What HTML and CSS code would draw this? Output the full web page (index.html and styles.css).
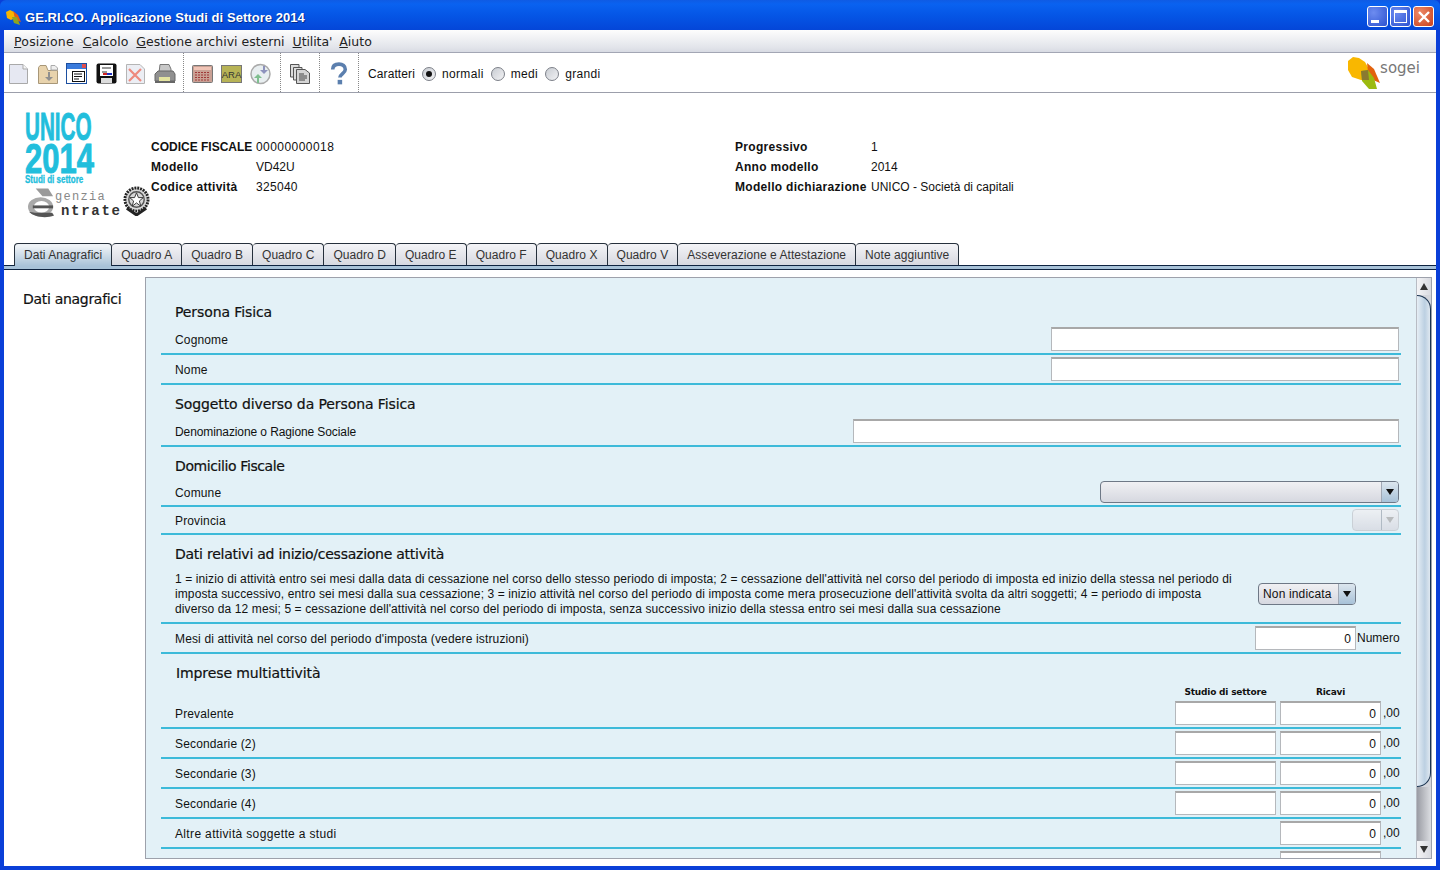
FILE: index.html
```html
<!DOCTYPE html>
<html lang="it">
<head>
<meta charset="utf-8">
<title>GE.RI.CO.</title>
<link rel="stylesheet" href="styles.css">
</head>
<body>
<div class="window">
  <header class="titlebar">
    <svg class="app-icon" viewBox="0 0 18 18" width="18" height="18"><path d="M1 4 L5 2 L9 4 L10 10 L6 12 L2 10Z" fill="#f7b500"/><path d="M8 3 L13 7 L16 14 L11 12Z" fill="#e85a10"/><path d="M7 9 L12 9 L15 17 L9 15Z" fill="#8fa520"/></svg>
    <span class="title-text">GE.RI.CO. Applicazione Studi di Settore 2014</span>
    <div class="win-buttons">
      <span class="wbtn"><i class="g-min"></i></span>
      <span class="wbtn"><i class="g-max"></i></span>
      <span class="wbtn close"><svg viewBox="0 0 12 12" width="12" height="12"><path d="M1 1L11 11M11 1L1 11" stroke="#fff" stroke-width="2.4"/></svg></span>
    </div>
  </header>
  <div class="frame">
    <nav class="menubar">
      <span class="m1"><u>P</u>osizione</span><span class="m2"><u>C</u>alcolo</span><span class="m3"><u>G</u>estione archivi esterni</span><span class="m4"><u>U</u>tilita'</span><span class="m5"><u>A</u>iuto</span>
    </nav>
    <div class="toolbar">
      <div class="tgroup g1">
        <svg class="ic" viewBox="0 0 22 22"><path d="M1.5 1.5H15L19.5 6V20.5H1.5Z" fill="#e6e8f2" stroke="#a9a9a9"/><path d="M15 1.5V6H19.5" fill="#f6f6f6" stroke="#a9a9a9"/></svg>
        <svg class="ic" viewBox="0 0 22 22"><path d="M1.5 4.5V20.5H20.5V7.5H11L9 2.5H3Z" fill="#e8d3ad" stroke="#a89778"/><path d="M11 9V14H8L12 18L16 14H13V9Z" fill="#8f8f8f"/><path d="M14 2.5H18L20.5 5V7H14Z" fill="#efefef" stroke="#aaa"/></svg>
        <svg class="ic" viewBox="0 0 22 22"><rect x="0.5" y="0.5" width="20" height="20" fill="#fff" stroke="#1c4fa0"/><rect x="1" y="1" width="19" height="5" fill="#3a7bdc"/><rect x="16" y="1" width="4" height="4" fill="#e05050"/><rect x="6.5" y="8.5" width="12" height="10" fill="#fff" stroke="#111"/><path d="M8 11H16M8 13.5H16M8 16H13" stroke="#111"/></svg>
        <svg class="ic" viewBox="0 0 22 22"><rect x="0.5" y="0.5" width="20" height="20" rx="2" fill="#111"/><rect x="4" y="2" width="13" height="11" fill="#fff"/><path d="M6 5H15M6 9H11" stroke="#333"/><path d="M7 11H11" stroke="#d02020" stroke-width="2"/><path d="M11 11H16" stroke="#2030c0" stroke-width="2"/><rect x="5" y="15" width="11" height="5" fill="#ddd"/></svg>
        <svg class="ic" viewBox="0 0 22 22"><path d="M1.5 1.5H15L19.5 6V20.5H1.5Z" fill="#eceef4" stroke="#b5b5b5"/><path d="M4 6L16 18M16 6L4 18" stroke="#ee8a7e" stroke-width="2.2"/></svg>
        <svg class="ic" viewBox="0 0 22 22"><path d="M6 1.5H15L17 6V10H5Z" fill="#c8c8c8" stroke="#777"/><path d="M1 11L4 8H19L21 11V18H1Z" fill="#909090" stroke="#666"/><rect x="5" y="14" width="11" height="4" fill="#e4e4a0"/><rect x="1" y="18" width="20" height="2" fill="#666"/></svg>
      </div>
      <div class="tgroup g2">
        <svg class="ic" viewBox="0 0 22 22"><rect x="0.5" y="2.5" width="20" height="17" rx="1" fill="#c9a094" stroke="#777"/><rect x="2" y="4" width="17" height="3" fill="#f0c4b6"/><path d="M3 9.5H18M3 12H18M3 14.5H18M3 17H18" stroke="#a03838" stroke-dasharray="2 1"/></svg>
        <svg class="ic" viewBox="0 0 22 22"><rect x="0.5" y="2.5" width="20" height="17" fill="#b7b356" stroke="#777"/><text x="10.5" y="15" class="ara">ARA</text></svg>
        <svg class="ic" viewBox="0 0 22 22"><circle cx="10.5" cy="11" r="9.5" fill="#e8eef0" stroke="#aaa" stroke-width="1.5"/><path d="M13 3V7H10L14 11L18 7H15V3Z" fill="#8d92bd"/><path d="M9 20V15H12L8 11L4 15H7V20Z" fill="#7fbf8f"/></svg>
      </div>
      <div class="tgroup g3">
        <svg class="ic" viewBox="0 0 22 22"><path d="M1.5 1.5H10V14H1.5Z" fill="#ddd" stroke="#555"/><path d="M4.5 4.5H13V17H4.5Z" fill="#ddd" stroke="#555"/><path d="M7.5 6.5H16L20.5 10V20.5H7.5Z" fill="#d5d5d5" stroke="#555"/><path d="M10 11H15M10 13H18M10 15H18M10 17H16" stroke="#444"/></svg>
      </div>
      <div class="tgroup g4">
        <svg class="help" viewBox="0 0 20 26"><path d="M3 8C3 3 7 2 10 2C14 2 17 4 17 8C17 12 11 13 11 17" fill="none" stroke="#5b7fae" stroke-width="4"/><rect x="8.5" y="19.5" width="5" height="5" fill="#5b7fae"/></svg>
      </div>
      <div class="chars">
        <span class="chars-label">Caratteri</span>
        <span class="radio on"></span><span class="rl">normali</span>
        <span class="radio"></span><span class="rl">medi</span>
        <span class="radio"></span><span class="rl">grandi</span>
      </div>
      <div class="sogei">
        <svg viewBox="0 2 36 36" width="36" height="36"><path d="M1 8 L6 4 L12 5 L18 9 L23 18 L22 27 L14 27 L5 24 L1 17Z" fill="#f9b700"/><path d="M20 10 L27 16 L33 30 L26 27 L21 19Z" fill="#e2620e"/><path d="M14 18 L21 17 L27 25 L30 36 L22 36 L15 28Z" fill="#9cba10"/><path d="M14 18 L21 17 L22 27 L15 27Z" fill="#8a7a30"/></svg>
        <span class="sogei-text">sogei</span>
      </div>
    </div>
    <div class="info">
      <div class="logos">
        <div class="unico">UNICO</div>
        <div class="y2014">2014</div>
        <div class="studi">Studi di settore</div>
        <div class="agenzia">
          <svg class="ae" viewBox="0 0 30 30" width="29" height="30"><path d="M9 0H22L27 8H16Z" fill="#9a9a9a"/><ellipse cx="14" cy="19" rx="13" ry="10" fill="#a9a9a9"/><ellipse cx="15" cy="19" rx="8" ry="6" fill="#fff"/><rect x="6" y="17.5" width="21" height="3" fill="#555"/><path d="M2 24C8 30 20 31 28 28L26 25H8Z" fill="#555"/></svg>
          <div class="ag-text"><span class="ag1">genzia</span><span class="ag2">ntrate</span></div>
          <svg class="emblem" viewBox="0 0 28 32" width="27" height="31"><circle cx="14" cy="15" r="12" fill="#d8d8d8" stroke="#222" stroke-width="3" stroke-dasharray="2 1"/><circle cx="14" cy="15" r="8" fill="none" stroke="#555" stroke-width="1.5"/><path d="M14 8L16 13L21 13L17 16.5L18.5 22L14 18.5L9.5 22L11 16.5L7 13L12 13Z" fill="#fff" stroke="#333"/><path d="M4 24L14 31L24 24" fill="none" stroke="#222" stroke-width="3"/></svg>
        </div>
      </div>
      <dl class="col-a">
        <dt class="caps">CODICE FISCALE</dt><dd class="digits">00000000018</dd>
        <dt>Modello</dt><dd>VD42U</dd>
        <dt>Codice attività</dt><dd class="digits short">325040</dd>
      </dl>
      <dl class="col-b">
        <dt>Progressivo</dt><dd>1</dd>
        <dt>Anno modello</dt><dd>2014</dd>
        <dt>Modello dichiarazione</dt><dd>UNICO - Società di capitali</dd>
      </dl>
    </div>
    <div class="tabs">
      <span class="tab active">Dati Anagrafici</span><span class="tab">Quadro A</span><span class="tab">Quadro B</span><span class="tab">Quadro C</span><span class="tab">Quadro D</span><span class="tab">Quadro E</span><span class="tab">Quadro F</span><span class="tab">Quadro X</span><span class="tab">Quadro V</span><span class="tab">Asseverazione e Attestazione</span><span class="tab">Note aggiuntive</span>
    </div>
    <div class="tab-band"></div>
    <div class="content">
      <h2 class="side-title">Dati anagrafici</h2>
      <div class="panel">
        <div class="form">
          <h3 class="sec s1">Persona Fisica</h3>
          <div class="row r30"><span class="lbl">Cognome</span><span class="inp w348"></span></div>
          <div class="row r30"><span class="lbl">Nome</span><span class="inp w348"></span></div>
          <h3 class="sec s2">Soggetto diverso da Persona Fisica</h3>
          <div class="row r30"><span class="lbl narrow">Denominazione o Ragione Sociale</span><span class="inp w546"></span></div>
          <h3 class="sec s2 tight">Domicilio Fiscale</h3>
          <div class="row r28"><span class="lbl">Comune</span><span class="combo w299"><i class="arrow"></i></span></div>
          <div class="row r28"><span class="lbl">Provincia</span><span class="combo w47 disabled"><i class="arrow"></i></span></div>
          <h3 class="sec s3">Dati relativi ad inizio/cessazione attività</h3>
          <div class="row rpara">
            <p class="para">1 = inizio di attività entro sei mesi dalla data di cessazione nel corso dello stesso periodo di imposta; 2 = cessazione dell'attività nel corso del periodo di imposta ed inizio della stessa nel periodo di imposta successivo, entro sei mesi dalla sua cessazione; 3 = inizio attività nel corso del periodo di imposta come mera prosecuzione dell'attività svolta da altri soggetti; 4 = periodo di imposta diverso da 12 mesi; 5 = cessazione dell'attività nel corso del periodo di imposta, senza successivo inizio della stessa entro sei mesi dalla sua cessazione</p>
            <span class="combo w98 nonind"><span>Non indicata</span><i class="arrow"></i></span>
          </div>
          <div class="row r30"><span class="lbl">Mesi di attività nel corso del periodo d'imposta (vedere istruzioni)</span><span class="inp w101 num mesi">0</span><span class="unit">Numero</span></div>
          <h3 class="sec s4">Imprese multiattività</h3>
          <div class="heads"><span class="h1">Studio di settore</span><span class="h2">Ricavi</span></div>
          <div class="row r30 money"><span class="lbl">Prevalente</span><span class="inp w101"></span><span class="inp w101 num">0</span><span class="cents">,00</span></div>
          <div class="row r30 money"><span class="lbl">Secondarie (2)</span><span class="inp w101"></span><span class="inp w101 num">0</span><span class="cents">,00</span></div>
          <div class="row r30 money"><span class="lbl">Secondarie (3)</span><span class="inp w101"></span><span class="inp w101 num">0</span><span class="cents">,00</span></div>
          <div class="row r30 money"><span class="lbl">Secondarie (4)</span><span class="inp w101"></span><span class="inp w101 num">0</span><span class="cents">,00</span></div>
          <div class="row r30 money"><span class="lbl wide">Altre attività soggette a studi</span><span class="inp w101 num">0</span><span class="cents">,00</span></div>
          <div class="row r30 money"><span class="inp w101 blank"></span></div>
        </div>
        <div class="scrollbar">
          <span class="sb-btn up"></span>
          <span class="thumb"></span>
          <span class="sb-track"></span>
          <span class="sb-btn down"></span>
        </div>
      </div>
    </div>
  </div>
</div>
</body>
</html>
```
FILE: styles.css
```css
* { box-sizing: border-box; }
html, body { margin: 0; height: 100%; overflow: hidden; }
body { font-family: "Liberation Sans", Arial, sans-serif; font-size: 12px; color: #111; }
.window { width: 1440px; height: 870px; display: flex; flex-direction: column; background: #0a3fd8; padding: 0 4px 4px 4px; }
.titlebar { height: 30px; margin: 0 -4px; padding: 3px 4px 0 5px; display: flex; align-items: center; background: linear-gradient(#0f5be4 0, #0a62f0 4px, #0556e6 50%, #0446d8 100%); border-radius: 6px 6px 0 0; color: #fff; }
.app-icon { margin-right: 2px; }
.title-text { font-family: "Liberation Sans", sans-serif; font-weight: 700; font-size: 13px; text-shadow: 1px 1px 0 #002a90; letter-spacing: .05px; margin-top: 1px; }
.win-buttons { margin-left: auto; display: flex; gap: 2px; padding-right: 2px; }
.wbtn { width: 21px; height: 21px; border: 1px solid #fff; border-radius: 3px; background: radial-gradient(circle at 30% 30%, #6d8cf0, #2c52d0); display: flex; align-items: center; justify-content: center; }
.wbtn.close { background: radial-gradient(circle at 30% 30%, #ee8a68, #c8401c); }
.g-min { width: 8px; height: 3px; background: #fff; align-self: flex-end; margin: 0 6px 3px 0; }
.g-max { width: 13px; height: 13px; border: 1px solid #fff; border-top-width: 3px; }
.frame { flex: 1; min-height: 0; background: #fff; display: flex; flex-direction: column; }
.menubar { height: 23px; padding: 0 0 0 10px; display: flex; align-items: center; background: linear-gradient(#fdfdfd, #e2e4ea 80%, #d8dbe3); border-bottom: 1px solid #a3a6b4; color: #222; font-family: "DejaVu Sans", sans-serif; font-size: 12.5px; }
.m1 { letter-spacing: .2px; margin-right: 9px; }
.m2 { margin-right: 8px; }
.m3 { margin-right: 8px; }
.m4 { margin-right: 7px; letter-spacing: -.1px; }
.toolbar { height: 40px; display: flex; align-items: center; border-bottom: 1px solid #9c9fab; background: #fff; }
.tgroup { height: 39px; display: flex; align-items: center; gap: 7px; padding-left: 4px; padding-top: 3px; border-right: 1px dotted #888; flex: none; }
.g1 { width: 180px; gap: 7.2px; }
.g2 { width: 97px; padding-left: 8px; }
.g3 { width: 39px; padding-left: 8px; }
.g4 { width: 39px; padding-left: 10px; }
.ic { width: 22px; height: 22px; flex: none; }
.ara { font: 400 9.5px "Liberation Sans", sans-serif; text-anchor: middle; fill: #333; }
.help { width: 18px; height: 24px; }
.chars { display: flex; align-items: center; margin-left: 9px; padding-top: 3px; letter-spacing: .1px; }
.chars-label { margin-right: 7px; }
.rl { margin: 0 7px 0 6px; letter-spacing: .35px; }
.radio { width: 14px; height: 14px; border-radius: 50%; border: 1px solid #7c8088; background: linear-gradient(135deg, #c8ccd2, #f2f2f4); position: relative; display: inline-block; flex: none; }
.radio.on::after { content: ""; position: absolute; left: 3px; top: 3px; width: 6px; height: 6px; border-radius: 50%; background: #111; }
.sogei { margin-left: auto; margin-right: 16px; display: flex; align-items: flex-start; height: 36px; }
.sogei-text { font: 15px "DejaVu Sans", sans-serif; color: #777; margin-left: -3px; margin-top: 4px; }
.info { height: 150px; display: flex; }
.logos { width: 147px; padding: 18px 0 0 21px; flex: none; }
.unico, .y2014, .studi { font-family: "Liberation Sans", sans-serif; font-weight: 700; color: #22bedc; transform-origin: left center; width: max-content; -webkit-text-stroke: 1px #22bedc; }
.unico { font-size: 39px; line-height: 32px; transform: scaleX(.53); }
.y2014 { font-size: 43px; line-height: 31px; transform: scaleX(.72); }
.studi { font-size: 10px; line-height: 12px; transform: scaleX(.8); -webkit-text-stroke: .3px #22bedc; }
.agenzia { display: flex; margin-left: 2px; margin-top: 2px; height: 30px; position: relative; }
.ae { flex: none; }
.ag-text { display: flex; flex-direction: column; padding-top: 2px; font-family: "Liberation Mono", monospace; line-height: 14px; }
.ag1 { font-size: 12px; color: #888; letter-spacing: 1.3px; margin-left: -1px; }
.ag2 { font-size: 14px; font-weight: 700; color: #333; letter-spacing: 1.7px; margin-left: 5px; }
.emblem { position: absolute; left: 96px; top: -3px; }
dl { margin: 44px 0 0; display: grid; grid-auto-rows: 20px; align-items: center; }
dt { font-weight: 700; font-size: 12px; white-space: nowrap; letter-spacing: .3px; }
dt.caps { letter-spacing: 0; }
dd { margin: 0; }
dd.digits { letter-spacing: .45px; }
dd.short { letter-spacing: .3px; }
.col-a { grid-template-columns: 105px auto; width: 584px; }
.col-b { grid-template-columns: 136px auto; }
.tabs { height: 23px; padding-left: 10px; display: flex; align-items: flex-end; border-bottom: 1px solid #0e2340; position: relative; }
.tab { height: 22px; padding: 0 9px; border: 1px solid #26303c; border-left: 0; border-bottom: 0; border-radius: 4px 4px 0 0; background: linear-gradient(#f4f4f7, #d6d8e0); display: flex; align-items: center; color: #333; letter-spacing: .05px; }
.tab.active { height: 23px; margin-bottom: -1px; border-left: 1px solid #26303c; background: linear-gradient(#eef2f6 10%, #a8c2d8); }
.tab-band { height: 4px; flex: none; background: #a8c2d8; border-bottom: 1px solid #0e2340; }
.content { flex: 1; min-height: 0; display: flex; padding-top: 7px; }
.side-title { width: 141px; margin: 0; padding: 14px 0 0 19px; font-family: "DejaVu Sans", sans-serif; font-size: 14px; font-weight: 400; letter-spacing: -.3px; flex: none; color: #111; -webkit-text-stroke: .2px #111; }
.panel { width: 1287px; height: 582px; background: #e3f1f7; border: 1px solid #9da1ab; display: flex; overflow: hidden; }
.form { width: 1270px; flex: none; padding: 0 15px; }
.sec { margin: 0; font-family: "DejaVu Sans", sans-serif; font-size: 14px; font-weight: 400; padding-left: 14px; letter-spacing: -.1px; color: #111; line-height: 17px; -webkit-text-stroke: .2px #111; }
.s1 { height: 47px; padding-top: 26px; }
.s2 { height: 32px; padding-top: 11px; }
.tight { letter-spacing: -.4px; }
.s3 { height: 31px; padding-top: 11px; letter-spacing: -.25px; }
.s4 { height: 37px; padding-top: 11px; padding-left: 15px; }
.row { display: flex; align-items: center; justify-content: flex-end; border-bottom: 2px solid #3dbad9; padding-right: 2px; }
.r30 { height: 30px; }
.r28 { height: 28px; }
.lbl { margin-right: auto; padding: 1px 0 0 14px; letter-spacing: .15px; }
.narrow { letter-spacing: -.1px; }
.wide { letter-spacing: .35px; }
.inp { height: 24px; background: #fff; border: 1px solid #b5b8bc; border-top: 2px solid #a8a8a8; display: block; flex: none; }
.w348 { width: 348px; }
.w546 { width: 546px; }
.w101 { width: 101px; }
.num { text-align: right; padding: 1px 4px 0 0; line-height: 20px; }
.combo { height: 22px; display: flex; align-items: center; border: 1px solid #6e7886; border-radius: 4px; background: linear-gradient(#f0f0f3, #d6d8e0); position: relative; flex: none; overflow: hidden; }
.w299 { width: 299px; }
.w47 { width: 47px; border-color: #c2c6cc; opacity: .75; }
.w98 { width: 98px; letter-spacing: .15px; }
.arrow { position: absolute; right: 0; top: 0; bottom: 0; width: 17px; background: linear-gradient(#dce6ee, #a8c2d8); border-left: 1px solid #a0a8b4; }
.arrow::after { content: ""; position: absolute; left: 4px; top: 7px; border: 4px solid transparent; border-top: 6px solid #111; border-bottom: 0; }
.disabled .arrow { background: transparent; }
.disabled .arrow::after { border-top-color: #aaa; }
.rpara { height: 58px; align-items: flex-start; justify-content: flex-start; padding: 0; position: relative; }
.para { margin: 0; padding: 6px 0 0 14px; width: 1071px; line-height: 15px; font-size: 12px; letter-spacing: .1px; }
.nonind { position: absolute; left: 1097px; top: 17px; padding-left: 4px; }
.mesi { margin-right: 1px; }
.unit { width: 44px; margin-right: -2px; }
.heads { height: 13px; line-height: 13px; margin-top: -5px; display: flex; justify-content: flex-end; gap: 4px; font-family: "DejaVu Sans", sans-serif; font-size: 9px; font-weight: 700; letter-spacing: -.2px; padding-right: 20px; }
.h1, .h2 { width: 101px; text-align: center; }
.money .inp + .inp { margin-left: 4px; }
.cents { width: 18px; margin: 0 -2px 0 2px; }
.blank { margin-right: 18px; }
.scrollbar { width: 15px; flex: none; display: flex; flex-direction: column; background: #d4d6dc; border-left: 1px solid #b8bcc4; }
.sb-btn { height: 17px; background: linear-gradient(90deg, #f4f4f6, #d8dae0); position: relative; flex: none; }
.sb-btn::after { content: ""; position: absolute; left: 3px; border: 4px solid transparent; }
.up::after { top: 5px; border-bottom: 7px solid #333; border-top: 0; }
.down::after { top: 5px; border-top: 7px solid #333; border-bottom: 0; }
.thumb { height: 492px; flex: none; background: linear-gradient(90deg, #e6eef5, #bcd0e2 60%, #dfe8f0); border: 1px solid #1a3350; border-left: 0; border-radius: 0 14px 14px 0; }
.sb-track { flex: 1; background: linear-gradient(90deg, #9a9ca4, #dcdee2); }
```
